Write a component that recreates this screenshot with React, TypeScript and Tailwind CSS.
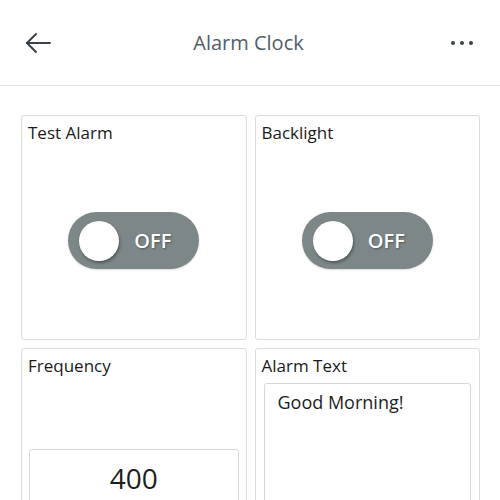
import React from "react";

function Toggle() {
  return (
    <div className="flex h-[57px] w-[131px] items-center rounded-full bg-[#7d8788] pl-[11px] shadow-[0_1px_2px_rgba(0,0,0,0.15)]">
      <div className="h-[40px] w-[40px] rounded-full bg-white shadow-[1px_2px_3px_rgba(0,0,0,0.35)]" />
      <span className="ml-[15px] text-[20px] font-semibold text-white [text-shadow:1px_1px_2px_rgba(0,0,0,0.35)]">OFF</span>
    </div>
  );
}

function Card({ title, children }: { title: string; children?: React.ReactNode }) {
  return (
    <div className="flex h-[225px] flex-col rounded-[3px] border border-[#d8dddd] bg-white">
      <div className="px-[6px] pt-[4px] text-[17px] leading-[26px] text-[#1a1a1a]">{title}</div>
      {children}
    </div>
  );
}

export default function App() {
  return (
    <div className="h-[500px] w-[500px] overflow-hidden bg-white font-['Open_Sans',sans-serif]">
      <div className="grid h-[86px] grid-cols-[1fr_auto_1fr] items-center border-b border-[#dfe3e3] px-[24px]">
        <svg width="28" height="22" viewBox="0 0 28 22" fill="none" stroke="#3a4148" strokeWidth="2" strokeLinecap="round" strokeLinejoin="round">
          <path d="M26 11H3" />
          <path d="M12 2L3 11L12 20" />
        </svg>
        <div className="pr-[3px] text-[20px] text-[#535d67]">Alarm Clock</div>
        <div className="flex justify-end gap-[5px] pr-[3px]">
          <span className="h-[4px] w-[4px] rounded-full bg-[#3a4148]" />
          <span className="h-[4px] w-[4px] rounded-full bg-[#3a4148]" />
          <span className="h-[4px] w-[4px] rounded-full bg-[#3a4148]" />
        </div>
      </div>
      <div className="grid grid-cols-2 gap-[8px] pl-[21px] pr-[20px] pt-[29px]">
        <Card title="Test Alarm">
          <div className="flex flex-1 items-center justify-center pb-[4px]">
            <Toggle />
          </div>
        </Card>
        <Card title="Backlight">
          <div className="flex flex-1 items-center justify-center pb-[4px]">
            <Toggle />
          </div>
        </Card>
        <Card title="Frequency">
          <div className="flex flex-1 items-end px-[7px] pb-[7px]">
            <div className="mb-[-2px] flex h-[118px] w-full items-start justify-center rounded-[3px] border border-[#d3d8d8] pt-[8px] text-[28px] leading-[40px] text-[#1d1d1d]">
              400
            </div>
          </div>
        </Card>
        <Card title="Alarm Text">
          <div className="flex-1 px-[8px] pb-[8px] pt-[4px]">
            <div className="h-full w-full rounded-[3px] border border-[#d3d8d8] px-[13px] pt-[5px] text-[18px] leading-[26px] text-[#1d1d1d]">
              Good Morning!
            </div>
          </div>
        </Card>
      </div>
    </div>
  );
}
